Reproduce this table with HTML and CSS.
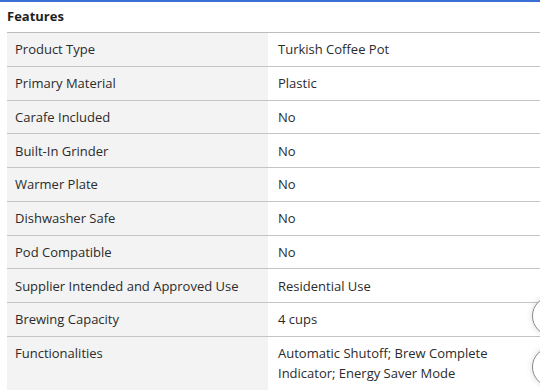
FILE: index.html
```html
<!DOCTYPE html>
<html lang="en">
<head>
    <meta charset="UTF-8">
    <meta name="viewport" content="width=device-width, initial-scale=1.0">
    <title>Features</title>
    <link rel="stylesheet" href="styles.css">
</head>
<body>
    <div id="specs">
        <h3 class="specs-title">Features</h3>

        <!-- Spec table -->
        <table class="spec-table">
            <tr><td class="spec-name">Product Type</td><td class="spec-value">Turkish Coffee Pot</td></tr>
            <tr><td class="spec-name">Primary Material</td><td class="spec-value">Plastic</td></tr>
            <tr><td class="spec-name">Carafe Included</td><td class="spec-value">No</td></tr>
            <tr><td class="spec-name">Built-In Grinder</td><td class="spec-value">No</td></tr>
            <tr><td class="spec-name">Warmer Plate</td><td class="spec-value">No</td></tr>
            <tr><td class="spec-name">Dishwasher Safe</td><td class="spec-value">No</td></tr>
            <tr><td class="spec-name">Pod Compatible</td><td class="spec-value">No</td></tr>
            <tr><td class="spec-name">Supplier Intended and Approved Use</td><td class="spec-value">Residential Use</td></tr>
            <tr><td class="spec-name">Brewing Capacity</td><td class="spec-value">4 cups</td></tr>
            <tr class="tall"><td class="spec-name">Functionalities</td><td class="spec-value">Automatic Shutoff; Brew Complete Indicator; Energy Saver Mode</td></tr>
        </table>

        <!-- Floating round buttons at the edge -->
        <div class="fab fab-top"></div>
        <div class="fab fab-bottom"></div>
    </div>
</body>
</html>
```

FILE: styles.css
```css
body {
    margin: 0;
    padding: 0;
    font-family: 'Open Sans', Arial, sans-serif;
    color: #2b2b2b;
    background-color: #fff;
    overflow: hidden;
}

#specs {
    position: relative;
    height: 390px;
    border-top: 2px solid #3a6fd6;
    padding-left: 7px;
    overflow: hidden;
}

.specs-title {
    margin: 0;
    height: 30px;
    line-height: 28px;
    font-size: 13px;
    font-weight: 700;
    color: #1f1f1f;
    border-bottom: 1px solid #bdbdbd;
}

.spec-table {
    width: 100%;
    border-collapse: collapse;
    font-size: 13px;
}

.spec-table td {
    height: 32.75px;
    padding: 0;
    border-bottom: 1px solid #c4c4c4;
    vertical-align: middle;
}

.spec-name {
    width: 253px;
    padding-left: 8px !important;
    background-color: #f3f3f3;
}

.spec-value {
    padding-left: 10px !important;
    padding-right: 40px !important;
    background-color: #fff;
    line-height: 20px;
}

.tall td {
    height: 51px;
    vertical-align: top;
    padding-top: 6px !important;
    line-height: 20px;
}

.fab {
    position: absolute;
    left: 532px;
    width: 38px;
    height: 38px;
    border: 1px solid #8a8a8a;
    border-radius: 50%;
    background-color: #fff;
    box-shadow: 0 0 6px rgba(0, 0, 0, 0.15);
}

.fab-top {
    top: 294px;
}

.fab-bottom {
    top: 345px;
}
```
